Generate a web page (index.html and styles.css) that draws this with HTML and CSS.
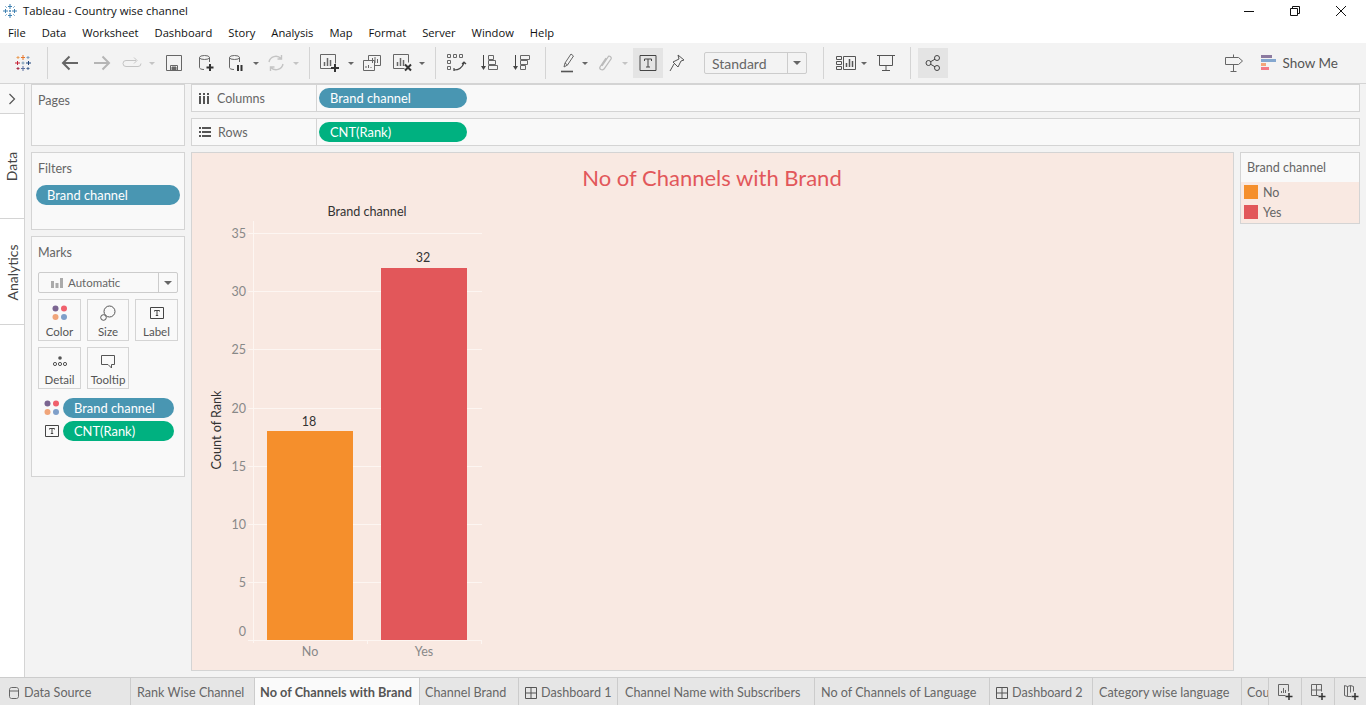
FILE: index.html
```html
<!DOCTYPE html>
<html lang="en">
<head>
  <meta charset="UTF-8" />
  <title>Tableau - Country wise channel</title>
  <link rel="stylesheet" href="styles.css">
</head>
<body>
  <!-- ================== Title bar ================== -->
  <header class="titlebar">
    <svg class="app-icon" width="14" height="14" viewBox="0 0 14 14" fill="none" stroke="#3d7fb0">
      <path d="M7 0v5M5 2.500h4M7 9v5M5 11.500h4M0 7h5M2.500 5v4M9 7h5M11.500 5v4M6 7h2M7 6v2" />
      <path d="M2 2l2 2M12 2l-2 2M2 12l2-2M12 12l-2-2" stroke="#8fb8d4"/>
    </svg>
    <span class="app-title">Tableau - Country wise channel</span>
    <div class="window-buttons">
      <svg width="12" height="12" viewBox="0 0 12 12" stroke="#111" fill="none"><path d="M1 6.500h10"/></svg>
      <svg width="12" height="12" viewBox="0 0 12 12" stroke="#111" fill="none"><path d="M1.500 3.500h7v7h-7zM3.500 3.500v-2h7v7h-2"/></svg>
      <svg width="12" height="12" viewBox="0 0 12 12" stroke="#111" fill="none"><path d="M1 1l10 10M11 1L1 11"/></svg>
    </div>
  </header>

  <nav class="menubar">
    <span>File</span><span>Data</span><span>Worksheet</span><span>Dashboard</span><span>Story</span>
    <span>Analysis</span><span>Map</span><span>Format</span><span>Server</span><span>Window</span><span>Help</span>
  </nav>

  <!-- ================== Toolbar ================== -->
  <div class="toolbar">
    <div class="tool w30">
      <svg width="18" height="18" viewBox="0 0 18 18" fill="none">
        <path d="M9 1v5M7 3.500h4" stroke="#e8762b"/><path d="M9 12v5M7 14.500h4" stroke="#5b6f9e"/>
        <path d="M1 9h5M3.500 7v4" stroke="#c72035"/><path d="M12 9h5M14.500 7v4" stroke="#1f447a"/>
        <path d="M7.500 9h3M9 7.500v3" stroke="#7a9bb5"/>
        <path d="M4 2v3M2.500 3.500h3" stroke="#eaa05c"/><path d="M14 2v3M12.500 3.500h3" stroke="#7f9fc0"/>
        <path d="M4 13v3M2.500 14.500h3" stroke="#a8324a"/><path d="M14 13v3M12.500 14.500h3" stroke="#4a6a96"/>
      </svg>
    </div>
    <i class="sep sep-a"></i>

    <div class="tool w32">
      <svg width="18" height="16" viewBox="0 0 18 16" fill="none" stroke="#666" stroke-width="2"><path d="M17 8H2M8.500 1.500L2 8l6.500 6.500"/></svg>
    </div>
    <div class="tool w32">
      <svg width="18" height="16" viewBox="0 0 18 16" fill="none" stroke="#b5b5b5" stroke-width="2"><path d="M1 8h15M9.500 1.500L16 8l-6.500 6.500"/></svg>
    </div>
    <div class="tool w28">
      <svg width="20" height="12" viewBox="0 0 20 12" fill="none" stroke="#c4c4c4"><path d="M14 3.500H4a3 3 0 0 0 0 6h12a3 3 0 0 0 3-3M12 .5l3 3-3 3"/></svg>
    </div>
    <div class="caret w12 faint"></div>
    <div class="tool w32">
      <svg width="16" height="16" viewBox="0 0 16 16" fill="none" stroke="#666"><path d="M.5.5h15v15H.5zM4.500 15.500v-5h7v5"/><path d="M6 12h4v3H6z" fill="#666"/></svg>
    </div>
    <div class="tool w32">
      <svg width="18" height="18" viewBox="0 0 18 18" fill="none" stroke="#666"><path d="M2.500 3.500v10c0 1 1.500 2 4.500 2M12.500 3.500V8"/><ellipse cx="7.500" cy="3.500" rx="5" ry="2"/><path d="M13 10v7M9.500 13.500h7" stroke="#333" stroke-width="2"/></svg>
    </div>
    <div class="tool w28">
      <svg width="18" height="18" viewBox="0 0 18 18" fill="none" stroke="#666"><path d="M2.500 3.500v10c0 1 1.500 2 4.500 2M12.500 3.500V8"/><ellipse cx="7.500" cy="3.500" rx="5" ry="2"/><path d="M11 11v6M14.500 11v6" stroke="#333" stroke-width="2"/></svg>
    </div>
    <div class="caret w12"></div>
    <div class="tool w28">
      <svg width="18" height="18" viewBox="0 0 18 18" fill="none" stroke="#c4c4c4" stroke-width="1.400"><path d="M2 8a7 7 0 0 1 12-3.500M16 10a7 7 0 0 1-12 3.500M14.500 1v4h-4M3.500 17v-4h4"/></svg>
    </div>
    <div class="caret w12 faint"></div>
    <i class="sep sep-b"></i>

    <div class="tool w30">
      <svg width="20" height="18" viewBox="0 0 20 18" fill="none" stroke="#666"><path d="M12.500 14.500H.5V.5h15v9"/><path d="M4.500 12V8M7.500 12V4M10.500 12V6" stroke-width="1.500"/><path d="M15 10v8M11 14h8" stroke="#333" stroke-width="2"/></svg>
    </div>
    <div class="caret w12"></div>
    <div class="tool w30">
      <svg width="18" height="16" viewBox="0 0 18 16" fill="none" stroke="#666"><path d="M5.500 5V.5h12v10H12M.5 5.500h11v10H.5zM3 13v-2M5.500 13v-3M8 13v-1M9.500 8V3M12 8V2M14.500 8V4"/></svg>
    </div>
    <div class="tool w32">
      <svg width="20" height="18" viewBox="0 0 20 18" fill="none" stroke="#666"><path d="M11.500 14.500h-11V.5h15v8"/><path d="M4.500 12V8M7.500 12V4M10.500 12V6" stroke-width="1.500"/><path d="M12 10.500l6 6M18 10.500l-6 6" stroke="#333" stroke-width="2"/></svg>
    </div>
    <div class="caret w6"></div>
    <i class="sep sep-c"></i>

    <div class="tool w32">
      <svg width="20" height="18" viewBox="0 0 20 18" fill="none" stroke="#666"><path d="M.5.5h3v3h-3zM6.500.5h3v3h-3zM12.500.5h3v3h-3zM.5 6.500h3v3h-3zM.5 12.500h3v3h-3z"/><path d="M7 16c4 0 8-2 10-7M15 10l2-2 2 2M7 14v3" stroke="#444" stroke-width="1.200"/></svg>
    </div>
    <div class="tool w32">
      <svg width="18" height="18" viewBox="0 0 18 18" fill="none" stroke="#666"><path d="M3.500 1v14" stroke="#444"/><path d="M1 12l2.500 4 2.500-4z" fill="#444" stroke="none"/><path d="M8.500 1.500h5v4h-5zM8.500 6.500h7v4h-7zM8.500 11.500h9v4h-9z"/></svg>
    </div>
    <div class="tool w32">
      <svg width="18" height="18" viewBox="0 0 18 18" fill="none" stroke="#666"><path d="M3.500 1v14" stroke="#444"/><path d="M1 12l2.500 4 2.500-4z" fill="#444" stroke="none"/><path d="M8.500 1.500h9v4h-9zM8.500 6.500h7v4h-7zM8.500 11.500h5v4h-5z"/></svg>
    </div>
    <i class="sep sep-d"></i>

    <div class="tool w28">
      <svg width="16" height="20" viewBox="0 0 16 20" fill="none" stroke="#666"><path d="M4 14l1-4 6-9 2.500 2-6 9zM5 10l2.500 2"/><path d="M1 18.500h12" stroke="#555" stroke-width="1.600"/></svg>
    </div>
    <div class="caret w6"></div>
    <div class="tool w34">
      <svg width="14" height="20" viewBox="0 0 14 20" fill="none" stroke="#bbb" stroke-width="1.300"><path d="M4 13l6-9c1-2 4 0 3 2l-7 10c-2 2-5 0-4-2l6-9"/></svg>
    </div>
    <div class="caret w6 faint"></div>
    <div class="tool w30 on gap-t">
      <svg width="18" height="16" viewBox="0 0 18 16" fill="none" stroke="#444"><path d="M1 .5h16v15H1zM5.500 6V4h7v2M9 4v8M7 12h4"/></svg>
    </div>
    <div class="tool w28">
      <svg width="16" height="18" viewBox="0 0 16 18" fill="none" stroke="#555"><path d="M9 1l6 5-3 1-2 4-1 2-5-5 2-1 4-2zM5 10l-4 7"/></svg>
    </div>
    <div class="fit-select">
      <span>Standard</span>
      <div class="select-arrow"></div>
    </div>
    <i class="sep sep-e"></i>

    <div class="tool w30">
      <svg width="20" height="14" viewBox="0 0 20 14" fill="none" stroke="#555"><path d="M.5.5h5v3h-5zM.5 5.500h5v3h-5zM.5 10.500h5v3h-5zM7.500.5h12v13h-12z"/><path d="M10.500 11V7M13.500 11V3M16.500 11V5" stroke-width="1.500"/></svg>
    </div>
    <div class="caret w6"></div>
    <div class="tool w38">
      <svg width="18" height="18" viewBox="0 0 18 18" fill="none" stroke="#555"><path d="M0 1.500h18M2.500 1.500v10h13v-10M9 11.500v5M5 16.500h8"/></svg>
    </div>
    <i class="sep sep-f"></i>
    <div class="tool w30 on">
      <svg width="16" height="16" viewBox="0 0 16 16" fill="none" stroke="#444"><circle cx="3.500" cy="8" r="2.500"/><circle cx="12" cy="3" r="2.500"/><circle cx="12" cy="13" r="2.500"/><path d="M5.500 6.800l4.500-2.600M5.500 9.200l4.500 2.600"/></svg>
    </div>

    <div class="toolbar-right">
      <svg width="18" height="18" viewBox="0 0 18 18" fill="none" stroke="#666"><path d="M.5 3.500h13l4 3.500-4 3.500H.5zM8.500 .5v3M8.500 10.500v7M5.500 17.500h6"/></svg>
      <div class="showme">
        <svg width="15" height="16" viewBox="0 0 15 16">
          <rect x="0" y="0" width="11" height="3" fill="#8c7aa0"/><rect x="0" y="4" width="15" height="3" fill="#84a7cf"/>
          <rect x="0" y="8" width="5" height="3" fill="#f4a67a"/><rect x="0" y="12" width="8" height="3" fill="#f47a86"/>
        </svg>
        <span>Show Me</span>
      </div>
    </div>
  </div>

  <!-- ================== Workspace ================== -->
  <main class="workspace">
    <aside class="rail">
      <div class="rail-chevron">
        <svg width="8" height="12" viewBox="0 0 8 12" fill="none" stroke="#555" stroke-width="1.200"><path d="M1.500 1l5 5-5 5"/></svg>
      </div>
      <div class="rail-tab rail-data"><span>Data</span></div>
      <div class="rail-tab rail-analytics"><span>Analytics</span></div>
    </aside>

    <section class="side">
      <div class="card card-pages"><h4>Pages</h4></div>
      <div class="card card-filters">
        <h4>Filters</h4>
        <div class="pill blue">Brand channel</div>
      </div>
      <div class="card card-marks">
        <h4>Marks</h4>
        <div class="mark-type">
          <svg width="12" height="10" viewBox="0 0 12 10" fill="#aaa"><rect x="0" y="3" width="3" height="7"/><rect x="4.500" y="5" width="3" height="5"/><rect x="9" y="0" width="3" height="10"/></svg>
          <span>Automatic</span>
          <div class="select-arrow"></div>
        </div>
        <div class="mark-grid">
          <div class="mark-btn">
            <svg width="16" height="16" viewBox="0 0 16 16"><circle cx="3.500" cy="3.500" r="3" fill="#7b6591"/><circle cx="12" cy="3.500" r="3" fill="#f0616d"/><circle cx="3.500" cy="12" r="3" fill="#f0a57a"/><circle cx="12" cy="12" r="3" fill="#7f9fc9"/></svg>
            <span>Color</span>
          </div>
          <div class="mark-btn">
            <svg width="16" height="16" viewBox="0 0 16 16" fill="none" stroke="#555"><circle cx="9.500" cy="6.500" r="5.500" fill="#f9f9f9"/><circle cx="3.500" cy="12.500" r="2.800" fill="#f9f9f9"/></svg>
            <span>Size</span>
          </div>
          <div class="mark-btn">
            <svg width="16" height="16" viewBox="0 0 16 16" fill="none" stroke="#444"><path d="M1.500 2.500h13v11h-13zM5.500 6.500v-1h5v1M8 5.500v5M6.800 10.500h2.400"/></svg>
            <span>Label</span>
          </div>
          <div class="mark-btn">
            <svg width="16" height="16" viewBox="0 0 16 16" fill="none" stroke="#555"><circle cx="8" cy="5" r="1.800" fill="#555" stroke="none"/><circle cx="3" cy="11" r="1.600"/><circle cx="8" cy="11" r="1.600"/><circle cx="13" cy="11" r="1.600"/></svg>
            <span>Detail</span>
          </div>
          <div class="mark-btn">
            <svg width="16" height="16" viewBox="0 0 16 16" fill="none" stroke="#555"><path d="M1.500 2.500h13v9h-3v3.500l-3.500-3.500h-6.500z"/></svg>
            <span>Tooltip</span>
          </div>
        </div>
        <div class="mark-row">
          <svg width="16" height="16" viewBox="0 0 16 16"><circle cx="3.500" cy="3.500" r="3" fill="#7b6591"/><circle cx="12" cy="3.500" r="3" fill="#f0616d"/><circle cx="3.500" cy="12" r="3" fill="#f0a57a"/><circle cx="12" cy="12" r="3" fill="#7f9fc9"/></svg>
          <div class="pill blue">Brand channel</div>
        </div>
        <div class="mark-row">
          <svg width="16" height="16" viewBox="0 0 16 16" fill="none" stroke="#444"><path d="M1.500 2.500h13v11h-13zM5.500 6.500v-1h5v1M8 5.500v5M6.800 10.500h2.400"/></svg>
          <div class="pill green">CNT(Rank)</div>
        </div>
      </div>
    </section>

    <section class="view">
      <div class="shelf">
        <div class="shelf-name">
          <svg width="11" height="11" viewBox="0 0 11 11" fill="#555"><rect x="0" y="3" width="2" height="8"/><rect x="4" y="3" width="2" height="8"/><rect x="8" y="3" width="2" height="8"/><rect x="0" y="0" width="2" height="2"/><rect x="4" y="0" width="2" height="2"/><rect x="8" y="0" width="2" height="2"/></svg>
          <span>Columns</span>
        </div>
        <div class="pill blue shelf-pill">Brand channel</div>
      </div>
      <div class="shelf">
        <div class="shelf-name">
          <svg width="12" height="10" viewBox="0 0 12 10" fill="#555"><rect x="0" y="0" width="2" height="2"/><rect x="3" y="0" width="9" height="2"/><rect x="0" y="4" width="2" height="2"/><rect x="3" y="4" width="9" height="2"/><rect x="0" y="8" width="2" height="2"/><rect x="3" y="8" width="9" height="2"/></svg>
          <span>Rows</span>
        </div>
        <div class="pill green shelf-pill">CNT(Rank)</div>
      </div>

      <div class="chart-row">
        <div class="chart">
          <svg class="plot" width="1041" height="517">
            <text class="chart-title" x="520" y="33" text-anchor="middle">No of Channels with Brand</text>
            <text class="col-header" x="175" y="63" text-anchor="middle">Brand channel</text>
            <text class="col-header" transform="translate(29 277) rotate(-90)" text-anchor="middle">Count of Rank</text>

            <g class="grid">
              <path d="M56 80.500h234M56 138.500h234M56 196.500h234M56 255.500h234M56 313.500h234M56 371.500h234M56 429.500h234"/>
              <path d="M61.500 68v422M56 487.500h234M175.500 487v4M289.500 487v4"/>
            </g>

            <rect x="75" y="278" width="86" height="209" fill="#f58f2c"/>
            <rect x="189" y="115" width="86" height="372" fill="#e2575a"/>

            <g class="tick">
              <text x="54" y="85">35</text>
              <text x="54" y="143">30</text>
              <text x="54" y="201">25</text>
              <text x="54" y="260">20</text>
              <text x="54" y="318">15</text>
              <text x="54" y="376">10</text>
              <text x="54" y="434">5</text>
              <text x="54" y="483">0</text>
            </g>
            <text class="tick-x" x="118" y="503" text-anchor="middle">No</text>
            <text class="tick-x" x="232" y="503" text-anchor="middle">Yes</text>
            <text class="value" x="117" y="273" text-anchor="middle">18</text>
            <text class="value" x="231" y="109" text-anchor="middle">32</text>
          </svg>
        </div>

        <div class="legend">
          <div class="legend-head">Brand channel</div>
          <div class="legend-body">
            <div class="legend-row"><i class="swatch orange"></i><span>No</span></div>
            <div class="legend-row"><i class="swatch red"></i><span>Yes</span></div>
          </div>
        </div>
      </div>
    </section>
  </main>

  <!-- ================== Sheet tabs ================== -->
  <footer class="tabs">
    <div class="tab t-source">
      <svg width="10" height="12" viewBox="0 0 10 12" fill="none" stroke="#666"><path d="M.5 2.500v7c0 1 1 2 2 2h5c1 0 2-1 2-2v-7c0-1-1-2-2-2h-5c-1 0-2 1-2 2zM.5 4h9"/></svg>
      <span>Data Source</span>
    </div>
    <div class="tab t-rank"><span>Rank Wise Channel</span></div>
    <div class="tab t-active"><span>No of Channels with Brand</span></div>
    <div class="tab t-brand"><span>Channel Brand</span></div>
    <div class="tab t-dash1">
      <svg width="12" height="12" viewBox="0 0 12 12" fill="none" stroke="#555"><path d="M.5.5h11v11H.5zM6 .5v11M.5 6h11"/></svg>
      <span>Dashboard 1</span>
    </div>
    <div class="tab t-names"><span>Channel Name with Subscribers</span></div>
    <div class="tab t-lang"><span>No of Channels of Language</span></div>
    <div class="tab t-dash2">
      <svg width="12" height="12" viewBox="0 0 12 12" fill="none" stroke="#555"><path d="M.5.5h11v11H.5zM6 .5v11M.5 6h11"/></svg>
      <span>Dashboard 2</span>
    </div>
    <div class="tab t-cat"><span>Category wise language</span></div>
    <div class="tab t-cou"><span>Cou</span></div>
    <div class="tab-add">
      <svg width="16" height="16" viewBox="0 0 16 16" fill="none" stroke="#666"><path d="M8.500 11.500h-7v-11h10v7M4.500 9V7M6.500 9V4M8.500 9V6"/><path d="M12 9v7M8.500 12.500h7" stroke="#333" stroke-width="1.500"/></svg>
    </div>
    <div class="tab-add">
      <svg width="16" height="16" viewBox="0 0 16 16" fill="none" stroke="#666"><path d="M8.500 11.500h-7v-11h10v7M6.500 .5v11M1.500 6h10"/><path d="M12 9v7M8.500 12.500h7" stroke="#333" stroke-width="1.500"/></svg>
    </div>
    <div class="tab-add">
      <svg width="16" height="16" viewBox="0 0 16 16" fill="none" stroke="#666"><path d="M8 12.500H4.500l-3-1v-10l3 1 3-1 3 1v5M4.500 2.500v10M7.500 1.500v7"/><path d="M12 9v7M8.500 12.500h7" stroke="#333" stroke-width="1.500"/></svg>
    </div>
  </footer>
</body>
</html>
```

FILE: styles.css
```css
* {
  box-sizing: border-box;
}
html,
body {
  margin: 0;
  height: 705px;
  overflow: hidden;
}
body {
  width: 1366px;
  background: #f3f3f3;
  font-family: "Lato", "Open Sans", sans-serif;
  font-size: 12px;
  color: #555;
}

/* title and menu */
.titlebar {
  height: 21px;
  background: #fff;
  display: flex;
  align-items: center;
  padding-left: 3px;
  font-family: "Open Sans", sans-serif;
  font-size: 11.35px;
  color: #111;
}
.app-title {
  margin-left: 6px;
}
.window-buttons {
  margin-left: auto;
  display: flex;
  gap: 34px;
  padding-right: 19px;
}
.menubar {
  height: 22px;
  background: #fff;
  display: flex;
  align-items: center;
  gap: 16px;
  padding-left: 8px;
  font-family: "Open Sans", sans-serif;
  font-size: 11.2px;
  color: #111;
}

/* toolbar */
.toolbar {
  height: 41px;
  display: flex;
  align-items: center;
  padding-left: 8px;
  padding-right: 28px;
  border-bottom: 1px solid #d4d4d4;
}
.tool {
  height: 30px;
  display: flex;
  align-items: center;
  justify-content: center;
  flex: none;
}
.tool.on {
  background: #e4e4e4;
}
.w28 { width: 28px; }
.w30 { width: 30px; }
.w32 { width: 32px; }
.w34 { width: 34px; }
.w38 { width: 38px; }
.gap-t {
  margin-left: 5px;
}
.caret {
  height: 30px;
  flex: none;
  display: flex;
  align-items: center;
  justify-content: center;
}
.caret::after {
  content: "";
  border-left: 3px solid transparent;
  border-right: 3px solid transparent;
  border-top: 3px solid #666;
}
.caret.faint::after {
  border-top-color: #c4c4c4;
}
.w6 { width: 6px; }
.w12 { width: 12px; }
.sep {
  width: 1px;
  height: 32px;
  background: #d4d4d4;
  flex: none;
}
.sep-a { margin: 0 6px 0 9px; }
.sep-b { margin: 0 5px 0 7px; }
.sep-c { margin: 0 5px 0 10px; }
.sep-d { margin: 0 8px 0 8px; }
.sep-e { margin: 0 7px 0 16px; }
.sep-f { margin: 0 7px 0 5px; }
.fit-select {
  width: 103px;
  height: 22px;
  margin-left: 13px;
  border: 1px solid #ccc;
  border-radius: 2px;
  display: flex;
  align-items: center;
  padding-left: 7px;
  font-size: 14px;
  color: #666;
  flex: none;
}
.select-arrow {
  margin-left: auto;
  width: 19px;
  height: 100%;
  border-left: 1px solid #ccc;
  display: flex;
  align-items: center;
  justify-content: center;
}
.select-arrow::after {
  content: "";
  border-left: 4px solid transparent;
  border-right: 4px solid transparent;
  border-top: 4px solid #666;
}
.toolbar-right {
  margin-left: auto;
  display: flex;
  align-items: center;
  gap: 18px;
}
.showme {
  display: flex;
  align-items: center;
  gap: 6px;
  font-size: 13.5px;
  color: #555;
}

/* workspace */
.workspace {
  height: 593px;
  display: flex;
}
.rail {
  width: 25px;
  background: #fff;
  border-right: 1px solid #d4d4d4;
  flex: none;
}
.rail-chevron {
  height: 30px;
  display: flex;
  align-items: center;
  justify-content: center;
  background: #f9f9f9;
  border-bottom: 1px solid #d4d4d4;
}
.rail-tab {
  display: flex;
  align-items: center;
  justify-content: center;
  border-bottom: 1px solid #d4d4d4;
  font-size: 14px;
  color: #444;
}
.rail-tab span {
  transform: rotate(-90deg);
  white-space: nowrap;
}
.rail-data {
  height: 105px;
}
.rail-analytics {
  height: 106px;
  padding-top: 2px;
}
.side {
  width: 154px;
  margin-left: 6px;
  display: flex;
  flex-direction: column;
  gap: 6px;
  flex: none;
}
.card {
  background: #f9f9f9;
  border: 1px solid #d4d4d4;
  padding: 8px 6px;
}
.card h4 {
  margin: 0;
  font-weight: normal;
  font-size: 12.5px;
  color: #666;
  line-height: 16px;
}
.card-pages {
  height: 62px;
}
.card-filters {
  height: 78px;
}
.card-filters .pill {
  margin: 8px -2px 0 -2px;
  height: 20px;
}
.card-marks {
  height: 241px;
}
.pill {
  height: 20px;
  border-radius: 10px;
  color: #fff;
  font-size: 12.9px;
  line-height: 20px;
  padding-left: 11px;
}
.blue {
  background: #4996b2;
}
.green {
  background: #00b180;
}
.mark-type {
  height: 21px;
  margin-top: 11px;
  background: #f9f9f9;
  border: 1px solid #ccc;
  border-radius: 2px;
  display: flex;
  align-items: center;
  padding-left: 12px;
  font-size: 11.5px;
  color: #666;
}
.mark-type span {
  margin-left: 5px;
}
.mark-grid {
  display: grid;
  grid-template-columns: 43px 42px 43px;
  gap: 6px 6px;
  margin-top: 6px;
}
.mark-btn {
  height: 42px;
  border: 1px solid #d4d4d4;
  display: flex;
  flex-direction: column;
  align-items: center;
  padding-top: 5px;
  font-size: 11.5px;
  color: #555;
  line-height: 14px;
  gap: 4px;
}
.mark-row {
  display: flex;
  align-items: center;
  gap: 3px;
  margin: 3px 4px 0 6px;
}
.mark-row:nth-child(4) {
  margin-top: 9px;
}
.mark-row .pill {
  flex: 1;
}

/* shelves and chart */
.view {
  width: 1169px;
  margin-left: 6px;
  display: flex;
  flex-direction: column;
  gap: 6px;
  flex: none;
}
.shelf {
  height: 28px;
  background: #f9f9f9;
  border: 1px solid #d4d4d4;
  display: flex;
  align-items: center;
}
.shelf-name {
  width: 125px;
  height: 100%;
  border-right: 1px solid #d4d4d4;
  display: flex;
  align-items: center;
  gap: 7px;
  padding-left: 7px;
  color: #666;
  font-size: 12.5px;
}
.shelf-pill {
  width: 148px;
  margin-left: 2px;
}
.chart-row {
  height: 519px;
  display: flex;
  gap: 6px;
}
.chart {
  width: 1043px;
  background: #f9e9e2;
  border: 1px solid #d4d4d4;
}
.plot {
  display: block;
  font-family: "Lato", sans-serif;
}
.chart-title {
  font-size: 22px;
  fill: #e2575a;
}
.col-header {
  font-size: 12.6px;
  fill: #333;
}
.grid {
  fill: none;
  stroke: #fdf6f2;
}
.tick text {
  font-size: 12.5px;
  fill: #888;
  text-anchor: end;
}
.tick-x {
  font-size: 12.5px;
  fill: #888;
}
.value {
  font-size: 12.5px;
  fill: #333;
}
.legend {
  width: 120px;
  height: 72px;
  border: 1px solid #d4d4d4;
  background: #f9f9f9;
}
.legend-head {
  height: 29px;
  line-height: 29px;
  padding-left: 6px;
  font-size: 12.6px;
  color: #666;
}
.legend-body {
  height: 41px;
  background: #f9e9e2;
  padding-left: 3px;
  padding-top: 3px;
}
.legend-row {
  height: 20px;
  display: flex;
  align-items: flex-start;
  gap: 5px;
  font-size: 12.5px;
  color: #666;
}
.swatch {
  width: 14px;
  height: 14px;
}
.orange {
  background: #f58f2c;
}
.red {
  background: #e2575a;
}

/* tabs */
.tabs {
  height: 28px;
  display: flex;
  background: #e6e6e6;
  border-top: 1px solid #ccc;
}
.tab {
  height: 100%;
  flex: none;
  display: flex;
  align-items: center;
  padding-top: 2px;
  border-right: 1px solid #ccc;
  font-size: 12.6px;
  color: #666;
  white-space: nowrap;
  overflow: hidden;
  gap: 5px;
}
.t-source { width: 131px; padding-left: 9px; }
.t-rank { width: 124px; padding-left: 6px; }
.t-active {
  width: 165px;
  padding-left: 5px;
  padding-top: 0;
  background: #fafafa;
  font-weight: bold;
  font-size: 12.75px;
  color: #555;
}
.t-brand { width: 99px; padding-left: 5px; }
.t-dash1 { width: 99px; padding-left: 6px; gap: 4px; }
.t-names { width: 197px; padding-left: 7px; }
.t-lang { width: 175px; padding-left: 6px; }
.t-dash2 { width: 103px; padding-left: 6px; gap: 4px; }
.t-cat { width: 149px; padding-left: 6px; }
.t-cou { width: 27px; padding-left: 5px; }
.tab-add {
  width: 33px;
  height: 100%;
  flex: none;
  display: flex;
  align-items: center;
  justify-content: center;
  border-right: 1px solid #ccc;
}
```
